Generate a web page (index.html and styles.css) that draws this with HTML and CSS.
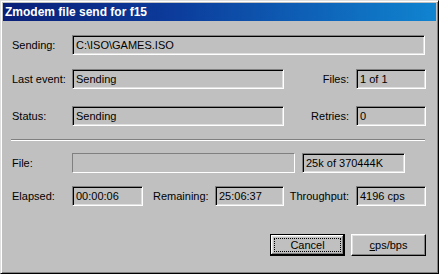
FILE: index.html
```html
<!DOCTYPE html>
<html>
<head>
<meta charset="utf-8">
<link rel="stylesheet" href="styles.css">
</head>
<body>
<div class="window">
  <div class="titlebar"><span class="title">Zmodem file send for f15</span></div>
  <div class="content">
    <div class="row row-sending">
      <span class="label lbl-main">Sending:</span>
      <div class="field w-full">C:\ISO\GAMES.ISO</div>
    </div>
    <div class="row row-event">
      <span class="label lbl-main">Last event:</span>
      <div class="field w-mid">Sending</div>
      <span class="label lbl-right">Files:</span>
      <div class="field w-small">1 of 1</div>
    </div>
    <div class="row row-status">
      <span class="label lbl-main">Status:</span>
      <div class="field w-mid">Sending</div>
      <span class="label lbl-right">Retries:</span>
      <div class="field w-small">0</div>
    </div>
    <div class="separator"></div>
    <div class="row row-file">
      <span class="label lbl-main">File:</span>
      <div class="progress"></div>
      <div class="field w-count">25k of 370444K</div>
    </div>
    <div class="row row-time">
      <span class="label lbl-main">Elapsed:</span>
      <div class="field w-time">00:00:06</div>
      <span class="label lbl-remaining">Remaining:</span>
      <div class="field w-time2">25:06:37</div>
      <span class="label lbl-right">Throughput:</span>
      <div class="field w-small">4196 cps</div>
    </div>
    <div class="buttons">
      <button class="btn btn-default"><span class="focus">Cancel</span></button>
      <button class="btn"><span class="btn-label"><u>c</u>ps/bps</span></button>
    </div>
  </div>
</div>
</body>
</html>
```
FILE: styles.css
```css
* { box-sizing: border-box; }
html, body {
  margin: 0;
  padding: 0;
  background: #c0c0c0;
}
body {
  font-family: "Liberation Sans", Arial, sans-serif;
  font-size: 11px;
  color: #000;
}
.window {
  width: 439px;
  height: 274px;
  background: #c0c0c0;
  border: 1px solid;
  border-color: #dfdfdf #000 #000 #dfdfdf;
  box-shadow: inset 1px 1px #fff, inset -1px -1px #808080;
  padding: 2px;
  display: flex;
  flex-direction: column;
}
.titlebar {
  height: 18px;
  background: linear-gradient(to right, #0a1f78 0%, #0c3c9c 40%, #1084d0 100%);
  display: flex;
  align-items: center;
  padding-left: 2px;
}
.title {
  color: #fff;
  font-weight: bold;
  font-size: 12px;
  line-height: 18px;
  white-space: nowrap;
}
.content {
  padding: 0 10px 0 9px;
  display: flex;
  flex-direction: column;
}
.row {
  display: flex;
  align-items: center;
  height: 20px;
}
.row-sending { margin-top: 14px; }
.row-event { margin-top: 14px; }
.row-status { margin-top: 17px; }
.row-file { margin-top: 12px; }
.row-time { margin-top: 13px; }
.label {
  white-space: nowrap;
  line-height: 20px;
}
.lbl-main { width: 60px; flex: none; }
.lbl-right { width: 72px; flex: none; text-align: right; padding-right: 7px; }
.lbl-remaining { width: 72px; flex: none; padding-left: 10px; }
.field {
  height: 20px;
  flex: none;
  border: 1px solid;
  border-color: #808080 #fff #fff #808080;
  box-shadow: inset 1px 1px #000, inset -1px -1px #dfdfdf;
  padding: 0 3px;
  line-height: 18px;
  white-space: nowrap;
  overflow: hidden;
}
.w-full { width: 353px; }
.w-mid { width: 212px; }
.w-small { width: 70px; }
.w-count { width: 103px; margin-left: 7px; }
.w-time { width: 71px; }
.w-time2 { width: 69px; }
.progress {
  width: 223px;
  height: 20px;
  flex: none;
  border: 1px solid;
  border-color: #808080 #fff #fff #808080;
}
.separator {
  margin-top: 13px;
  margin-left: -1px;
  width: 414px;
  height: 2px;
  border-top: 1px solid #808080;
  border-bottom: 1px solid #fff;
}
.buttons {
  margin-top: 28px;
  display: flex;
  justify-content: flex-end;
  gap: 6px;
}
.btn {
  width: 75px;
  height: 22px;
  padding: 0;
  margin: 0;
  font-family: inherit;
  font-size: 11px;
  color: #000;
  background: #c0c0c0;
  border: 1px solid;
  border-color: #fff #000 #000 #fff;
  box-shadow: inset -1px -1px #808080, inset 1px 1px #dfdfdf;
  display: flex;
  align-items: center;
  justify-content: center;
}
.btn-default {
  border-color: #000;
  box-shadow: inset -1px -1px #000, inset 1px 1px #fff, inset -2px -2px #808080, inset 2px 2px #dfdfdf;
  padding: 3px;
}
.focus {
  flex: 1;
  align-self: stretch;
  border: 1px dotted #000;
  display: flex;
  align-items: center;
  justify-content: center;
  line-height: 12px;
}
.btn-label { line-height: 12px; }
u { text-decoration: underline; }
```
